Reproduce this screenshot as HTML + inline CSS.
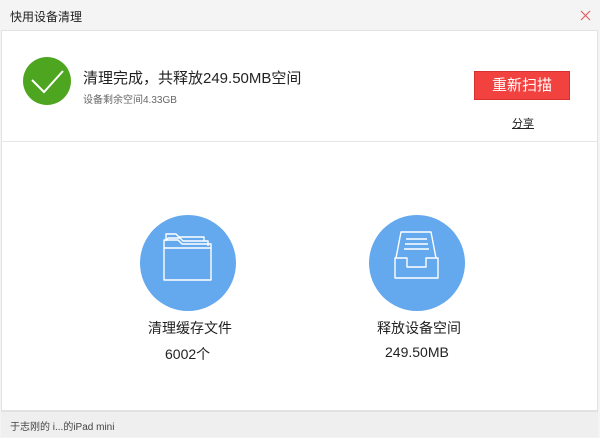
<!DOCTYPE html>
<html><head><meta charset="utf-8"><style>
*{margin:0;padding:0;box-sizing:border-box}
body{width:600px;height:438px;background:#f4f4f4;font-family:"Liberation Sans","Noto Sans CJK SC",sans-serif;position:relative;overflow:hidden;color:#222}
.a{position:absolute}
</style></head><body>
<div class="a" style="left:10px;top:8px;font-size:12px;color:#222">快用设备清理</div>
<svg class="a" style="left:580px;top:10px" width="11" height="11"><path d="M1 1L10 10M10 1L1 10" stroke="#e06060" stroke-width="1.2"/></svg>
<div class="a" style="left:1px;top:30px;width:597px;height:381px;background:#fff;border:1px solid #e2e2e2"></div>
<div class="a" style="left:1px;top:141px;width:597px;height:1px;background:#e6e6e6"></div>
<div class="a" style="left:23px;top:57px;width:48px;height:48px;border-radius:50%;background:#4ea51f"></div>
<svg class="a" style="left:23px;top:57px" width="48" height="48"><path d="M9 23 L21 35 L40 14" fill="none" stroke="#fff" stroke-width="2"/></svg>
<div class="a" style="left:83px;top:67px;font-size:15px;color:#222;white-space:nowrap">清理完成，共释放249.50MB空间</div>
<div class="a" style="left:83px;top:91px;font-size:10px;color:#666;white-space:nowrap">设备剩余空间4.33GB</div>
<div class="a" style="left:474px;top:71px;width:96px;height:29px;background:#f2423f;border:1px solid #d83030;color:#fff;font-size:15px;text-align:center;line-height:27px">重新扫描</div>
<div class="a" style="left:512px;top:115px;font-size:11px;color:#222;text-decoration:underline">分享</div>
<div class="a" style="left:140px;top:215px;width:96px;height:96px;border-radius:50%;background:#64a8ee"></div>
<svg class="a" style="left:140px;top:215px" width="96" height="96" fill="none" stroke="#fff" stroke-width="1.4" stroke-linejoin="round">
<path d="M26 26 L26 19 L36 19 L39 22 L64 22 L64 26"/><path d="M26 26 L28 23 L40 23 L43 26 L68 26 L68 31"/>
<path d="M24 65 L24 25 L38 25 L42 29 L71 29 L71 65 Z"/><path d="M24 33 L71 33"/></svg>
<div class="a" style="left:369px;top:215px;width:96px;height:96px;border-radius:50%;background:#64a8ee"></div>
<svg class="a" style="left:369px;top:215px" width="96" height="96" fill="none" stroke="#fff" stroke-width="1.4" stroke-linejoin="round">
<path d="M27 43 L32 17 L62 17 L67 43"/><path d="M26 43 L26 63 L69 63 L69 43 L57 43 L57 52 L38 52 L38 43 Z"/>
<path d="M37 24 L58 24 M36 29 L59 29 M35 34 L60 34"/></svg>
<div class="a" style="left:148px;top:318px;font-size:14px;color:#222;white-space:nowrap">清理缓存文件</div>
<div class="a" style="left:165px;top:344px;font-size:14px;color:#222">6002个</div>
<div class="a" style="left:377px;top:318px;font-size:14px;color:#222;white-space:nowrap">释放设备空间</div>
<div class="a" style="left:385px;top:344px;font-size:14px;color:#222">249.50MB</div>
<div class="a" style="left:1px;top:411px;width:597px;height:26px;background:#efefef;border-top:1px solid #e2e2e2"></div>
<div class="a" style="left:10px;top:418px;font-size:10px;color:#444;white-space:nowrap">于志刚的 i...的iPad mini</div>
</body></html>
